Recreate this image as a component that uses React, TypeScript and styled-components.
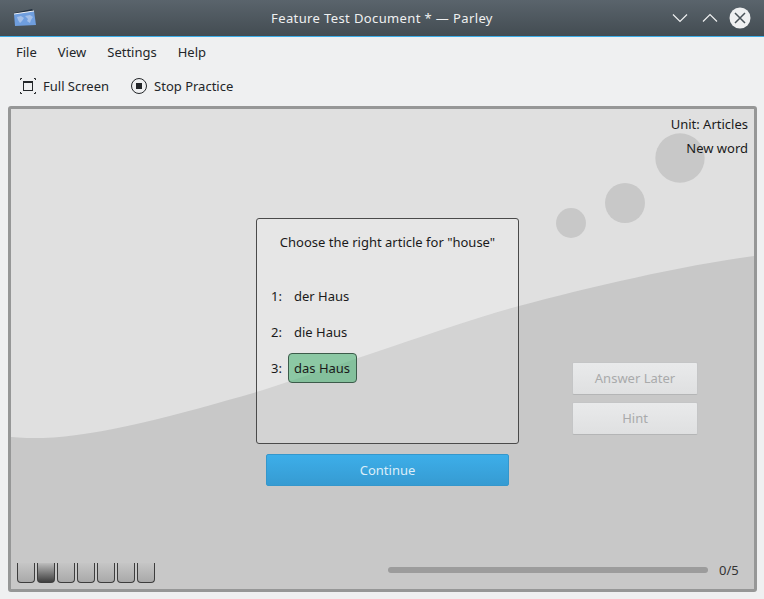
import React from "react";
import styled, { createGlobalStyle } from "styled-components";

const GlobalStyle = createGlobalStyle`
  html, body {
    margin: 0;
    padding: 0;
    background: #eff0f1;
  }
  * {
    box-sizing: border-box;
  }
`;

const Window = styled.div`
  width: 764px;
  height: 599px;
  display: flex;
  flex-direction: column;
  background: #eff0f1;
  color: #232629;
  font-family: "Noto Sans", sans-serif;
  font-size: 13px;
  overflow: hidden;
`;

const TitleBar = styled.div`
  height: 37px;
  flex: none;
  display: grid;
  grid-template-columns: 1fr auto;
  align-items: center;
  position: relative;
  background: linear-gradient(#5a646c, #434c52);
  border-bottom: 1px solid #3daee9;
  padding: 0 13px 0 12px;
`;

const TitleText = styled.div`
  position: absolute;
  left: 0;
  right: 0;
  top: 9px;
  text-align: center;
  color: #eff0f1;
  letter-spacing: 0.38px;
`;

const AppIcon = styled.svg`
  width: 25px;
  height: 20px;
`;

const WindowButtons = styled.div`
  display: flex;
  align-items: center;
  gap: 8px;
`;

const WindowButton = styled.svg`
  width: 22px;
  height: 22px;
  display: block;
`;

const MenuBar = styled.div`
  height: 31px;
  flex: none;
  display: flex;
  align-items: center;
  padding: 0 16px 2px;
  gap: 21px;
`;

const ToolBar = styled.div`
  height: 37px;
  flex: none;
  display: flex;
  align-items: center;
  padding: 0 20px 2px;
  gap: 22px;
`;

const ToolButton = styled.div`
  display: flex;
  align-items: center;
  gap: 7px;
`;

const Stage = styled.div`
  position: relative;
  width: 749px;
  height: 486px;
  margin: 1px 0 0 8px;
  border: 3px solid #969797;
  border-radius: 3px;
  background: #e0e0e0;
  color: #1a1a1a;
  display: grid;
  grid-template-columns: 245px 263px 1fr;
  grid-template-rows: 109px 226px 1fr auto;
`;

const Backdrop = styled.svg`
  position: absolute;
  left: 0;
  top: 0;
  width: 743px;
  height: 480px;
`;

const UnitInfo = styled.div`
  position: relative;
  grid-column: 1 / -1;
  grid-row: 1;
  padding: 3px 6px 0 0;
  text-align: right;
  line-height: 24px;
`;

const Card = styled.div`
  position: relative;
  grid-column: 2;
  grid-row: 2;
  border: 1px solid #4a4a4a;
  border-radius: 3px;
  background: rgba(255, 255, 255, 0.2);
  padding: 14px 14px 0 14px;
`;

const Question = styled.div`
  text-align: center;
  line-height: 18px;
  margin-bottom: 30px;
`;

const Choices = styled.div`
  display: flex;
  flex-direction: column;
  gap: 6px;
`;

const Choice = styled.div`
  display: flex;
  align-items: center;
  height: 30px;
  gap: 6px;
`;

const ChoiceNumber = styled.span`
  width: 11px;
`;

const ChoiceLabel = styled.span<{ $correct?: boolean }>`
  height: 30px;
  width: 69px;
  line-height: 28px;
  padding: 0 5px;
  border-radius: 4px;
  border: 1px solid ${props => (props.$correct ? "#3c5b4a" : "transparent")};
  background: ${props => (props.$correct ? "rgba(80, 180, 120, 0.6)" : "transparent")};
`;

const ContinueRow = styled.div`
  position: relative;
  grid-column: 2;
  grid-row: 3;
  padding: 10px 10px 0 10px;
`;

const ContinueButton = styled.div`
  height: 32px;
  line-height: 31px;
  text-align: center;
  color: #dceef9;
  background: linear-gradient(#3daee9, #369bd2);
  border: 1px solid #3497cc;
  border-radius: 2px;
`;

const SideButtons = styled.div`
  position: relative;
  grid-column: 3;
  grid-row: 2;
  padding: 144px 0 0 53px;
  display: flex;
  flex-direction: column;
  gap: 7px;
`;

const SideButton = styled.div`
  width: 126px;
  height: 33px;
  line-height: 31px;
  text-align: center;
  color: #a9aaab;
  background: linear-gradient(#e9eaeb, #dfe0e1);
  border: 1px solid #c4c5c6;
  border-bottom-color: #b4b5b6;
  border-radius: 2px;
`;

const Footer = styled.div`
  position: relative;
  grid-column: 1 / -1;
  grid-row: 4;
  display: flex;
  align-items: flex-end;
  padding: 0 15px 6px 6px;
`;

const Pieces = styled.div`
  display: flex;
  gap: 2px;
  margin-right: 233px;
`;

const Piece = styled.div<{ $dark?: boolean }>`
  width: 18px;
  height: 20px;
  border: 1px solid #3d3d3d;
  border-top: none;
  border-radius: 0 0 4px 4px;
  background: ${props =>
    props.$dark
      ? "linear-gradient(#bdbdbd, #3f3f3f)"
      : "linear-gradient(#c6c6c6, #a9a9a9)"};
`;

const ProgressTrack = styled.div`
  width: 320px;
  height: 6px;
  margin: 0 11px 10px 0;
  background: #9c9c9c;
  border-radius: 3px;
`;

const ProgressText = styled.div`
  line-height: 18px;
  margin-bottom: 4px;
  color: #333;
`;

const App = () => (
  <Window>
    <GlobalStyle />
    <TitleBar>
      <AppIcon viewBox="0 0 25 20">
        <path d="M2 5 L20 1 L22 4 L2 6 Z" fill="#22303f" />
        <path d="M2 6 L22 3 L24 17 L3 18 Z" fill="#6f9ede" />
        <path d="M2 6 L22 3" stroke="#eef1f6" strokeWidth="1" />
        <path d="M5 9 l4 -1 l3 2 l-2 3 l-2 2 l-2 -3 Z M13 8 l5 -1 l3 2 l-2 3 l-1 3 l-3 -2 l1 -2 Z" fill="#a3bfe8" />
      </AppIcon>
      <TitleText>Feature Test Document * — Parley</TitleText>
      <WindowButtons>
        <WindowButton viewBox="0 0 22 22">
          <path d="M4 7.5 L11 14.5 L18 7.5" fill="none" stroke="#eff0f1" strokeWidth="1.2" />
        </WindowButton>
        <WindowButton viewBox="0 0 22 22">
          <path d="M4 14.5 L11 7.5 L18 14.5" fill="none" stroke="#eff0f1" strokeWidth="1.2" />
        </WindowButton>
        <WindowButton viewBox="0 0 22 22">
          <circle cx="11" cy="11" r="10.5" fill="#eff0f1" />
          <path d="M6 6 L16 16 M16 6 L6 16" stroke="#4a5359" strokeWidth="1.5" />
        </WindowButton>
      </WindowButtons>
    </TitleBar>

    <MenuBar>
      <span>File</span>
      <span>View</span>
      <span>Settings</span>
      <span>Help</span>
    </MenuBar>

    <ToolBar>
      <ToolButton>
        <svg width="16" height="16" viewBox="0 0 16 16">
          <path d="M0.5 2 V0.5 H2 M14 0.5 H15.5 V2 M15.5 14 V15.5 H14 M2 15.5 H0.5 V14" fill="none" stroke="#232629" />
          <rect x="3.5" y="3.5" width="9" height="9" fill="none" stroke="#232629" />
          <rect x="3" y="3" width="10" height="2" fill="#232629" />
        </svg>
        Full Screen
      </ToolButton>
      <ToolButton>
        <svg width="16" height="16" viewBox="0 0 16 16">
          <circle cx="8" cy="8" r="7.5" fill="none" stroke="#232629" />
          <rect x="5" y="5" width="6" height="6" fill="#232629" />
        </svg>
        Stop Practice
      </ToolButton>
    </ToolBar>

    <Stage>
      <Backdrop viewBox="0 0 743 480">
        <path
          d="M0 328 C10 329 20 329 32 329 C89 327 169 305 249 282 C339 253 439 216 508 197 C579 178 669 157 743 147 V480 H0 Z"
          fill="#c8c8c8"
        />
        <circle cx="669" cy="49" r="24.7" fill="#c8c8c8" />
        <circle cx="614" cy="94" r="20" fill="#c8c8c8" />
        <circle cx="560" cy="114" r="15" fill="#c8c8c8" />
      </Backdrop>

      <UnitInfo>
        <div>Unit: Articles</div>
        <div>New word</div>
      </UnitInfo>

      <Card>
        <Question>Choose the right article for "house"</Question>
        <Choices>
          <Choice>
            <ChoiceNumber>1:</ChoiceNumber>
            <ChoiceLabel>der Haus</ChoiceLabel>
          </Choice>
          <Choice>
            <ChoiceNumber>2:</ChoiceNumber>
            <ChoiceLabel>die Haus</ChoiceLabel>
          </Choice>
          <Choice>
            <ChoiceNumber>3:</ChoiceNumber>
            <ChoiceLabel $correct>das Haus</ChoiceLabel>
          </Choice>
        </Choices>
      </Card>

      <SideButtons>
        <SideButton>Answer Later</SideButton>
        <SideButton>Hint</SideButton>
      </SideButtons>

      <ContinueRow>
        <ContinueButton>Continue</ContinueButton>
      </ContinueRow>

      <Footer>
        <Pieces>
          {[0, 1, 2, 3, 4, 5, 6].map(i => (
            <Piece key={i} $dark={i === 1} />
          ))}
        </Pieces>
        <ProgressTrack />
        <ProgressText>0/5</ProgressText>
      </Footer>
    </Stage>
  </Window>
);

export default App;
